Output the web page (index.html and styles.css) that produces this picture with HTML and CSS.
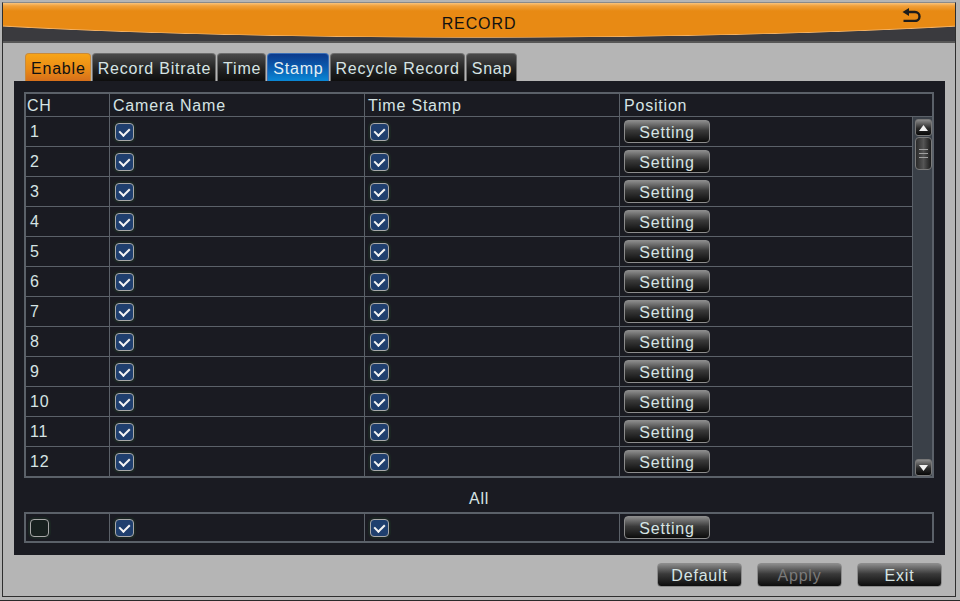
FILE: index.html
```html
<!DOCTYPE html>
<html>
<head>
<meta charset="utf-8">
<link rel="stylesheet" href="styles.css">
</head>
<body>
<div class="window">
  <header class="titlebar">
    <span class="title-side"></span>
    <h1 class="title">RECORD</h1>
    <span class="title-side title-actions">
      <svg class="back-icon" width="20" height="14" viewBox="0 0 20 14"><polygon points="0.5,4 7,0 7,8" fill="#1c1c1c"/><path d="M6 4 H13 A4.5 4.5 0 0 1 13 13 H1.5" fill="none" stroke="#1c1c1c" stroke-width="2.4"/></svg>
    </span>
  </header>
  <main class="content">
    <nav class="tabs">
      <span class="tab tab-orange">Enable</span>
      <span class="tab">Record Bitrate</span>
      <span class="tab">Time</span>
      <span class="tab tab-blue">Stamp</span>
      <span class="tab">Recycle Record</span>
      <span class="tab">Snap</span>
    </nav>
    <section class="panel">
      <div class="table">
        <div class="thead">
          <div class="cell">CH</div>
          <div class="cell">Camera Name</div>
          <div class="cell">Time Stamp</div>
          <div class="cell">Position</div>
        </div>
        <div class="tbody">
          <div class="rows">
            <div class="row"><div class="cell num">1</div><div class="cell"><span class="cb on"></span></div><div class="cell"><span class="cb on"></span></div><div class="cell"><button class="btn set">Setting</button></div></div>
            <div class="row"><div class="cell num">2</div><div class="cell"><span class="cb on"></span></div><div class="cell"><span class="cb on"></span></div><div class="cell"><button class="btn set">Setting</button></div></div>
            <div class="row"><div class="cell num">3</div><div class="cell"><span class="cb on"></span></div><div class="cell"><span class="cb on"></span></div><div class="cell"><button class="btn set">Setting</button></div></div>
            <div class="row"><div class="cell num">4</div><div class="cell"><span class="cb on"></span></div><div class="cell"><span class="cb on"></span></div><div class="cell"><button class="btn set">Setting</button></div></div>
            <div class="row"><div class="cell num">5</div><div class="cell"><span class="cb on"></span></div><div class="cell"><span class="cb on"></span></div><div class="cell"><button class="btn set">Setting</button></div></div>
            <div class="row"><div class="cell num">6</div><div class="cell"><span class="cb on"></span></div><div class="cell"><span class="cb on"></span></div><div class="cell"><button class="btn set">Setting</button></div></div>
            <div class="row"><div class="cell num">7</div><div class="cell"><span class="cb on"></span></div><div class="cell"><span class="cb on"></span></div><div class="cell"><button class="btn set">Setting</button></div></div>
            <div class="row"><div class="cell num">8</div><div class="cell"><span class="cb on"></span></div><div class="cell"><span class="cb on"></span></div><div class="cell"><button class="btn set">Setting</button></div></div>
            <div class="row"><div class="cell num">9</div><div class="cell"><span class="cb on"></span></div><div class="cell"><span class="cb on"></span></div><div class="cell"><button class="btn set">Setting</button></div></div>
            <div class="row"><div class="cell num">10</div><div class="cell"><span class="cb on"></span></div><div class="cell"><span class="cb on"></span></div><div class="cell"><button class="btn set">Setting</button></div></div>
            <div class="row"><div class="cell num">11</div><div class="cell"><span class="cb on"></span></div><div class="cell"><span class="cb on"></span></div><div class="cell"><button class="btn set">Setting</button></div></div>
            <div class="row"><div class="cell num">12</div><div class="cell"><span class="cb on"></span></div><div class="cell"><span class="cb on"></span></div><div class="cell"><button class="btn set">Setting</button></div></div>
          </div>
          <div class="scrollbar">
            <span class="sb-btn"><svg width="9" height="6" viewBox="0 0 9 6"><polygon points="4.5,0 9,6 0,6" fill="#f2f2f2"/></svg></span>
            <span class="sb-thumb"><i></i><i></i><i></i></span>
            <span class="sb-track"></span>
            <span class="sb-btn"><svg width="9" height="6" viewBox="0 0 9 6"><polygon points="0,0 9,0 4.5,6" fill="#f2f2f2"/></svg></span>
          </div>
        </div>
      </div>
      <div class="all-label">All</div>
      <div class="table all-table">
        <div class="row all-row">
          <div class="cell num"><span class="cb"></span></div>
          <div class="cell"><span class="cb on"></span></div>
          <div class="cell"><span class="cb on"></span></div>
          <div class="cell"><button class="btn set">Setting</button></div>
        </div>
      </div>
    </section>
    <footer class="actions">
      <button class="btn act">Default</button>
      <button class="btn act disabled">Apply</button>
      <button class="btn act">Exit</button>
    </footer>
  </main>
</div>
</body>
</html>
```

FILE: styles.css
```css
* { box-sizing: border-box; }
html, body { margin: 0; padding: 0; }
body {
  width: 960px;
  height: 601px;
  overflow: hidden;
  background: linear-gradient(to top, #2a2a2a 1px, #b5b5b5 1px);
  font-family: "Liberation Sans", Arial, sans-serif;
  font-size: 16px;
  letter-spacing: 0.8px;
  color: #d6e4e4;
  padding: 2px 0 0 2px;
}
.window {
  width: 954px;
  height: 595px;
  border: 1px solid #2e2e2e;
  border-top-color: #8a8a8a;
  background: #b5b5b5;
  display: flex;
  flex-direction: column;
}
.titlebar {
  height: 40px;
  flex: none;
  display: grid;
  grid-template-columns: 1fr auto 1fr;
  align-items: start;
  border-bottom: 2px solid #575757;
  background:
    linear-gradient(to bottom, rgba(255,215,160,0.75) 0px, rgba(255,200,130,0.35) 3px, rgba(255,180,90,0) 8px),
    radial-gradient(ellipse 700px 41px at 477px -6px, #e88a14 0, #e88a14 96.5%, #f3b266 98.5%, #3a3a3e 100%),
    linear-gradient(to bottom, #3c3c40, #262629);
}
.title {
  margin: 0;
  padding-top: 12px;
  font-size: 16px;
  line-height: 18px;
  font-weight: normal;
  color: #111;
  letter-spacing: 0.9px;
}
.title-actions {
  display: flex;
  justify-content: flex-end;
  padding: 5px 33px 0 0;
}
.back-icon { display: block; }
.content {
  flex: 1;
  display: flex;
  flex-direction: column;
  padding: 10px 10px 9px 11px;
}
.tabs {
  display: flex;
  gap: 1px;
  margin-left: 11px;
  height: 28px;
}
.tab {
  height: 28px;
  padding: 1px 4px 0 5px;
  line-height: 27px;
  border: 1px solid #6e6e6e;
  border-bottom: none;
  border-radius: 4px 4px 0 0;
  background: linear-gradient(to bottom, #4a4a4a, #202020 60%, #0e0e0e);
  color: #d6e4e4;
  white-space: nowrap;
}
.tab-orange {
  background: linear-gradient(to bottom, #f6a417, #eb8c16 55%, #d66f1a);
  border-color: #c88a3a;
  color: #111;
}
.tab-blue {
  background: linear-gradient(to bottom, #0c3a8c, #0a5cb0 50%, #0a88d6);
  border-color: #3b6fb6;
  color: #e4f0f4;
}
.panel {
  height: 474px;
  background: #1a1b22;
  padding: 11px 11px 12px 10px;
}
.table {
  width: 910px;
  border: 2px solid #5b6169;
}
.thead, .row {
  display: grid;
  grid-template-columns: 84px 255px 255px 1fr;
}
.thead {
  height: 23px;
  border-bottom: 1px solid #5b6169;
  line-height: 22px;
}
.thead .cell { padding: 1px 0 0 3px; }
.thead .cell:first-child { padding-left: 1px; }
.cell {
  border-right: 1px solid #5b6169;
  display: flex;
  align-items: center;
  padding-left: 5px;
  white-space: nowrap;
}
.cell:last-child { border-right: none; padding-left: 4px; }
.cell.num { padding-left: 4px; }
.tbody {
  display: flex;
  height: 359px;
}
.rows { flex: 1; }
.row {
  height: 30px;
  border-bottom: 1px solid #5b6169;
}
.rows .row:last-child { height: 29px; border-bottom: none; }
.cb {
  width: 19px;
  height: 18px;
  border: 1px solid #a8a8a8;
  border-radius: 4px;
  background: #18211f;
  box-shadow: 0 0 0 2px #1b2523;
  display: inline-block;
  position: relative;
}
.cb.on {
  background: #1f3f6e;
}
.cb.on::after {
  content: "";
  position: absolute;
  left: 5px;
  top: 2px;
  width: 5px;
  height: 8px;
  border: solid #f4f4f4;
  border-width: 0 2.5px 2.5px 0;
  transform: rotate(45deg);
}
.btn {
  font-family: inherit;
  font-size: 16px;
  letter-spacing: 0.8px;
  color: #d6e4e4;
  border: 1px solid #8c8c8c;
  border-radius: 4px;
  background: linear-gradient(to bottom, #8a8a8a, #3a3a3a 45%, #0c0c0c);
  padding: 2px 0 0;
  margin: 0;
  display: flex;
  align-items: center;
  justify-content: center;
}
.set {
  width: 86px;
  height: 23px;
  line-height: 19px;
}
.scrollbar {
  width: 20px;
  border-left: 1px solid #5b6169;
  background: #3a4048;
  display: flex;
  flex-direction: column;
  padding: 2px 0 0 2px;
}
.sb-btn {
  width: 17px;
  height: 17px;
  border-radius: 3px;
  border: 1px solid #777;
  background: linear-gradient(to bottom, #8a8a8a, #2a2a2a 55%, #080808);
  display: flex;
  align-items: center;
  justify-content: center;
  flex: none;
}
.sb-thumb {
  margin-top: 1px;
  width: 17px;
  height: 33px;
  border-radius: 4px;
  border: 1px solid #7a7a7a;
  background: linear-gradient(to right, #2a2a2a, #555 50%, #1a1a1a);
  display: flex;
  flex-direction: column;
  align-items: center;
  justify-content: center;
  gap: 3px;
  flex: none;
}
.sb-thumb i {
  display: block;
  width: 9px;
  height: 1px;
  background: #a0a0a0;
}
.sb-track { flex: 1; }
.all-label {
  height: 34px;
  padding-top: 12px;
  line-height: 18px;
  text-align: center;
  width: 910px;
}
.all-table .all-row {
  height: 27px;
  border-bottom: none;
}
.actions {
  display: flex;
  justify-content: flex-end;
  gap: 15px;
  margin-top: 8px;
  padding-right: 3px;
}
.act {
  width: 85px;
  height: 24px;
  line-height: 20px;
}
.act.disabled { color: #7a7a7a; }
```
